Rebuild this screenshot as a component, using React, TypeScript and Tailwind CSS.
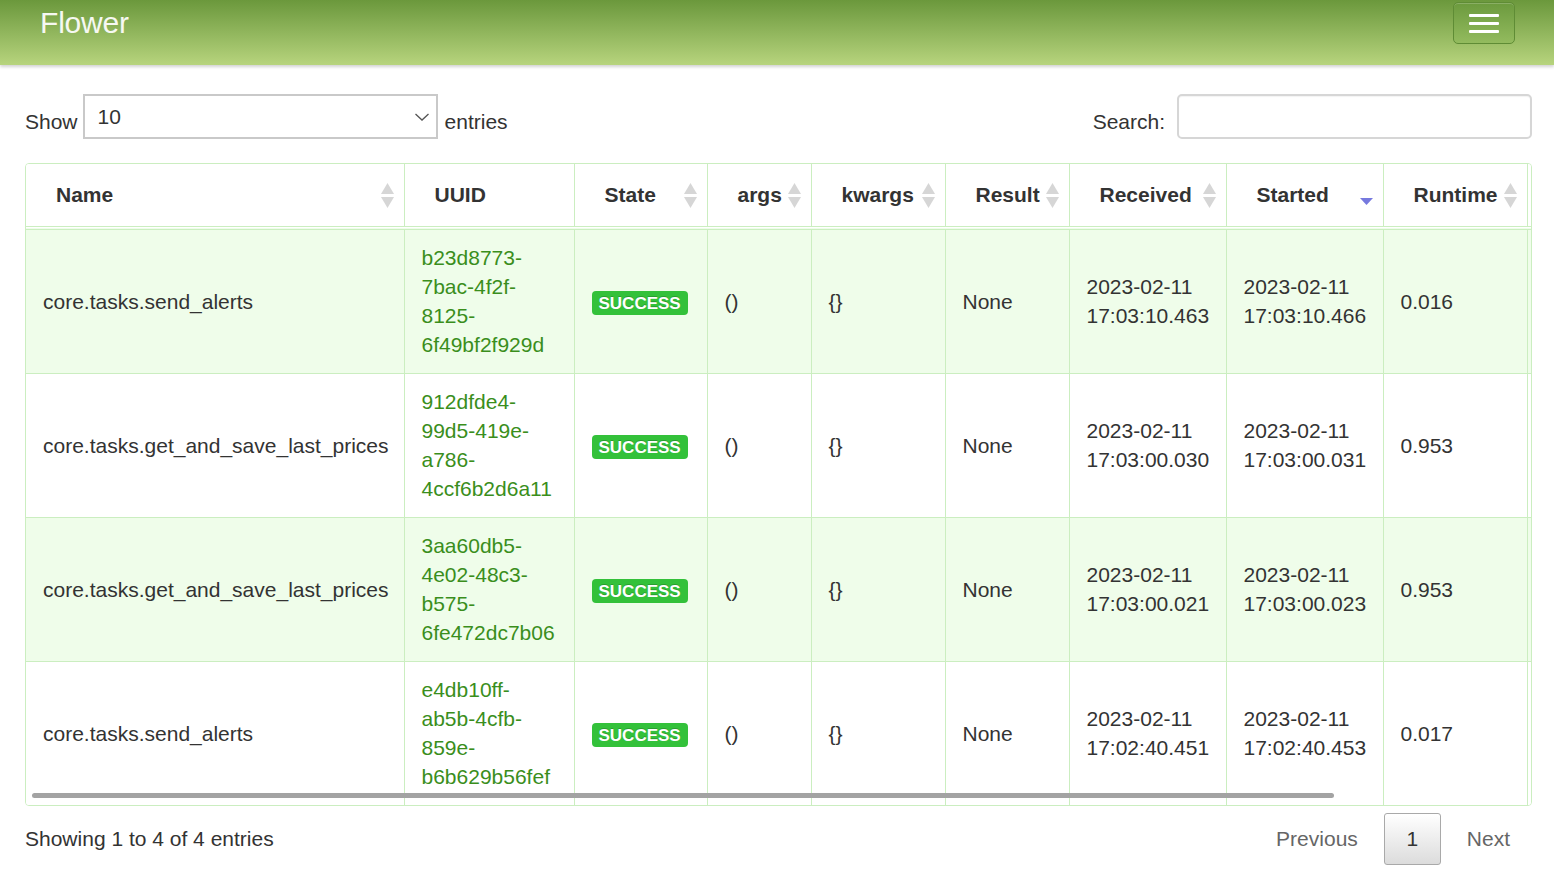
import React from 'react';

type Task = {
    name: string;
    uuid: string[];
    received: string;
    started: string;
    runtime: string;
};

const tasks: Task[] = [
    {
        name: 'core.tasks.send_alerts',
        uuid: ['b23d8773-', '7bac-4f2f-', '8125-', '6f49bf2f929d'],
        received: '17:03:10.463',
        started: '17:03:10.466',
        runtime: '0.016',
    },
    {
        name: 'core.tasks.get_and_save_last_prices',
        uuid: ['912dfde4-', '99d5-419e-', 'a786-', '4ccf6b2d6a11'],
        received: '17:03:00.030',
        started: '17:03:00.031',
        runtime: '0.953',
    },
    {
        name: 'core.tasks.get_and_save_last_prices',
        uuid: ['3aa60db5-', '4e02-48c3-', 'b575-', '6fe472dc7b06'],
        received: '17:03:00.021',
        started: '17:03:00.023',
        runtime: '0.953',
    },
    {
        name: 'core.tasks.send_alerts',
        uuid: ['e4db10ff-', 'ab5b-4cfb-', '859e-', 'b6b629b56fef'],
        received: '17:02:40.451',
        started: '17:02:40.453',
        runtime: '0.017',
    },
];

// DataTables-style sort arrows
const SortIcon: React.FC<{ desc?: boolean }> = ({ desc }) => (
    <svg width="13" height="25" viewBox="0 0 13 25" className="shrink-0">
        {desc ? (
            <polygon points="0,15 13,15 6.5,22" fill="#7679de" />
        ) : (
            <>
                <polygon points="6.5,0 13,11 0,11" fill="#d6d6d6" />
                <polygon points="0,14 13,14 6.5,25" fill="#d6d6d6" />
            </>
        )}
    </svg>
);

const headers = [
    { label: 'Name', w: 'w-[378px]', sort: true },
    { label: 'UUID', w: 'w-[170px]', sort: false },
    { label: 'State', w: 'w-[133px]', sort: true },
    { label: 'args', w: 'w-[104px]', sort: true },
    { label: 'kwargs', w: 'w-[134px]', sort: true },
    { label: 'Result', w: 'w-[124px]', sort: true },
    { label: 'Received', w: 'w-[157px]', sort: true },
    { label: 'Started', w: 'w-[157px]', sort: true, desc: true },
    { label: 'Runtime', w: 'w-[144px]', sort: true },
    { label: '', w: 'w-[150px]', sort: false },
];

const App: React.FC = () => {
    return (
        <div className="min-h-screen bg-white text-[#333] font-['Liberation_Sans',Arial,sans-serif] text-[21px]">
            {/* Navbar */}
            <div className="h-[65px] bg-linear-to-b from-[#6b983c] to-[#b7d47d] shadow-[0_2px_3px_rgba(0,0,0,0.18)] flex items-start justify-between pl-[40px] pr-[39px]">
                <div className="pt-[8px] leading-none text-[30px] text-[#f6f8f2] tracking-[-0.2px]">Flower</div>
                <button className="mt-[2px] w-[62px] h-[42px] rounded-[5px] border border-[#5f8c35] bg-linear-to-b from-[#6c9a3e] to-[#93bb5e] shadow-[inset_0_1px_0_rgba(255,255,255,0.2)] flex flex-col items-center justify-center gap-[5px]">
                    <span className="block w-[30px] h-[3px] rounded-[1px] bg-white" />
                    <span className="block w-[30px] h-[3px] rounded-[1px] bg-white" />
                    <span className="block w-[30px] h-[3px] rounded-[1px] bg-white" />
                </button>
            </div>

            <div className="pl-[25px] pr-[22px]">
                {/* Controls */}
                <div className="mt-[29px] flex items-center justify-between h-[45px]">
                    <div className="flex items-center">
                        <span className="mt-[10px]">Show</span>
                        <div className="ml-[5px] w-[355px] h-[45px] border-2 border-[#c9c9c9] flex items-center justify-between pl-[13px] pr-[6px]">
                            <span>10</span>
                            <svg width="16" height="10" viewBox="0 0 16 10">
                                <polyline points="1.5,2 8,8 14.5,2" fill="none" stroke="#555" strokeWidth="1.3" />
                            </svg>
                        </div>
                        <span className="ml-[7px] mt-[10px]">entries</span>
                    </div>
                    <div className="flex items-center">
                        <span className="mt-[10px]">Search:</span>
                        <div className="ml-[12px] w-[355px] h-[45px] border-2 border-[#d6d6d6] rounded-[5px] shadow-[inset_0_1px_1px_rgba(0,0,0,0.05)]" />
                    </div>
                </div>

                {/* Table */}
                <div className="relative mt-[24px] w-[1507px] overflow-hidden rounded-[4px] border border-[#cbeec0]">
                    <table className="table-fixed border-collapse w-[1651px]">
                        <colgroup>
                            {headers.map((h, i) => (
                                <col key={i} className={h.w} />
                            ))}
                        </colgroup>
                        <thead>
                            <tr>
                                {headers.map((h, i) => (
                                    <th
                                        key={i}
                                        className={`h-[64px] p-0 bg-white border-b-[4px] border-double border-[#cbeec0] ${i < headers.length - 1 ? 'border-r' : ''}`}
                                    >
                                        <div className="flex items-center justify-between pl-[30px] pr-[10px] font-bold text-left">
                                            <span>{h.label}</span>
                                            {h.sort && <SortIcon desc={h.desc} />}
                                        </div>
                                    </th>
                                ))}
                            </tr>
                        </thead>
                        <tbody>
                            {tasks.map((t, i) => {
                                const bg = i % 2 === 0 ? 'bg-[#effdea]' : 'bg-white';
                                const td = `px-[17px] pt-[13px] pb-[14px] leading-[29px] align-middle border-r border-[#cbeec0] ${i > 0 ? 'border-t' : ''}`;
                                return (
                                    <tr key={i} className={bg}>
                                        <td className={td}>{t.name}</td>
                                        <td className={`${td} text-[#3a8e1c]`}>
                                            {t.uuid.map(part => (
                                                <div key={part}>{part}</div>
                                            ))}
                                        </td>
                                        <td className={td}>
                                            <span className="inline-block h-[24px] leading-[25px] px-[7px] rounded-[4px] bg-[#33c13a] text-white font-bold text-[17px] [text-shadow:0_-1px_0_rgba(0,0,0,0.2)]">
                                                SUCCESS
                                            </span>
                                        </td>
                                        <td className={td}>()</td>
                                        <td className={td}>{'{}'}</td>
                                        <td className={td}>None</td>
                                        <td className={td}>
                                            <div>2023-02-11</div>
                                            <div>{t.received}</div>
                                        </td>
                                        <td className={td}>
                                            <div>2023-02-11</div>
                                            <div>{t.started}</div>
                                        </td>
                                        <td className={td}>{t.runtime}</td>
                                        <td className={`${td} border-r-0`} />
                                    </tr>
                                );
                            })}
                        </tbody>
                    </table>
                    {/* overlay scrollbar */}
                    <div className="absolute left-[6px] bottom-[7px] w-[1302px] h-[5px] rounded-full bg-[#a3a3a3]" />
                </div>

                {/* Footer */}
                <div className="flex items-center justify-between mt-[7px]">
                    <span>Showing 1 to 4 of 4 entries</span>
                    <div className="flex items-center text-[#666]">
                        <span className="px-[26px]">Previous</span>
                        <span className="w-[57px] h-[52px] flex items-center justify-center rounded-[3px] border border-[#a9a9a9] bg-linear-to-b from-white to-[#dcdcdc] text-[#333]">
                            1
                        </span>
                        <span className="pl-[26px] pr-[22px]">Next</span>
                    </div>
                </div>
            </div>
        </div>
    );
};

export default App;
